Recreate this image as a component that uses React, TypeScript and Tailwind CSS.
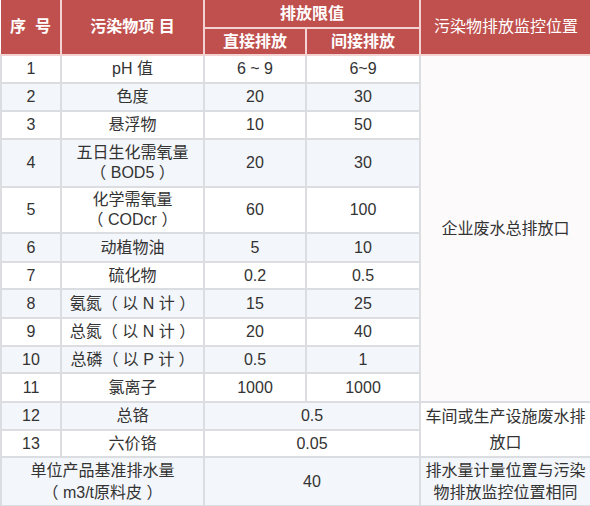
const rows: { n: string; name: React.ReactNode; d: string; i: string; h: string }[] = [
  { n: '1', name: 'pH 值', d: '6 ~ 9', i: '6~9', h: 'h-[28px]' },
  { n: '2', name: '色度', d: '20', i: '30', h: 'h-[28px]' },
  { n: '3', name: '悬浮物', d: '10', i: '50', h: 'h-[28px]' },
  { n: '4', name: <>五日生化需氧量<br />（ BOD5 ）</>, d: '20', i: '30', h: 'h-[48px]' },
  { n: '5', name: <>化学需氧量<br />（ CODcr ）</>, d: '60', i: '100', h: 'h-[46px]' },
  { n: '6', name: '动植物油', d: '5', i: '10', h: 'h-[29px]' },
  { n: '7', name: '硫化物', d: '0.2', i: '0.5', h: 'h-[27px]' },
  { n: '8', name: '氨氮（ 以 N 计 ）', d: '15', i: '25', h: 'h-[29px]' },
  { n: '9', name: '总氮（ 以 N 计 ）', d: '20', i: '40', h: 'h-[28px]' },
  { n: '10', name: '总磷（ 以 P 计 ）', d: '0.5', i: '1', h: 'h-[27px]' },
  { n: '11', name: '氯离子', d: '1000', i: '1000', h: 'h-[29px]' },
];

const td = 'border-2 border-[#dcdde0] text-center align-middle p-0';
const th = 'border-2 border-[#f3d3d2] bg-[#c0504d] text-white font-bold text-center align-middle p-0';

export default function App() {
  return (
    <div className="w-[590px] h-[506px] bg-white overflow-hidden">
      <table
        className="w-[590px] table-fixed border-collapse text-[16px] leading-[20px] text-[#333]"
        style={{ fontFamily: '"Liberation Sans", "Noto Sans CJK SC", sans-serif' }}
      >
        <colgroup>
          <col className="w-[60px]" />
          <col className="w-[143px]" />
          <col className="w-[102px]" />
          <col className="w-[114px]" />
          <col className="w-[171px]" />
        </colgroup>
        <thead>
          <tr className="h-[28px]">
            <th rowSpan={2} className={`${th} border-t-0 border-l-0`}>序&nbsp;&nbsp;号</th>
            <th rowSpan={2} className={`${th} border-t-0`}>污染物项 目</th>
            <th colSpan={2} className={`${th} border-t-0`}>排放限值</th>
            <th rowSpan={2} className={`${th} border-t-0 border-r-0 font-normal`}>污染物排放监控位置</th>
          </tr>
          <tr className="h-[27px]">
            <th className={th}>直接排放</th>
            <th className={th}>间接排放</th>
          </tr>
        </thead>
        <tbody>
          {rows.map((r, idx) => (
            <tr key={r.n} className={`${r.h} ${idx % 2 === 1 ? 'bg-[#f3f6fa]' : 'bg-white'}`}>
              <td className={td}>{r.n}</td>
              <td className={td}>{r.name}</td>
              <td className={td}>{r.d}</td>
              <td className={td}>{r.i}</td>
              {idx === 0 && (
                <td rowSpan={11} className={`${td} bg-[#fdfafc]`}>企业废水总排放口</td>
              )}
            </tr>
          ))}
          <tr className="h-[28px] bg-[#f3f6fa]">
            <td className={td}>12</td>
            <td className={td}>总铬</td>
            <td colSpan={2} className={td}>0.5</td>
            <td rowSpan={2} className={`${td} leading-[26px] bg-white`}>
              车间或生产设施废水排
              <br />
              放口
            </td>
          </tr>
          <tr className="h-[27px] bg-white">
            <td className={td}>13</td>
            <td className={td}>六价铬</td>
            <td colSpan={2} className={td}>0.05</td>
          </tr>
          <tr className="h-[49px] bg-[#f3f6fa]">
            <td colSpan={2} className={`${td} leading-[22px]`}>
              单位产品基准排水量
              <br />
              （ m3/t原料皮 ）
            </td>
            <td colSpan={2} className={td}>40</td>
            <td className={`${td} leading-[22px]`}>
              排水量计量位置与污染
              <br />
              物排放监控位置相同
            </td>
          </tr>
        </tbody>
      </table>
    </div>
  );
}
